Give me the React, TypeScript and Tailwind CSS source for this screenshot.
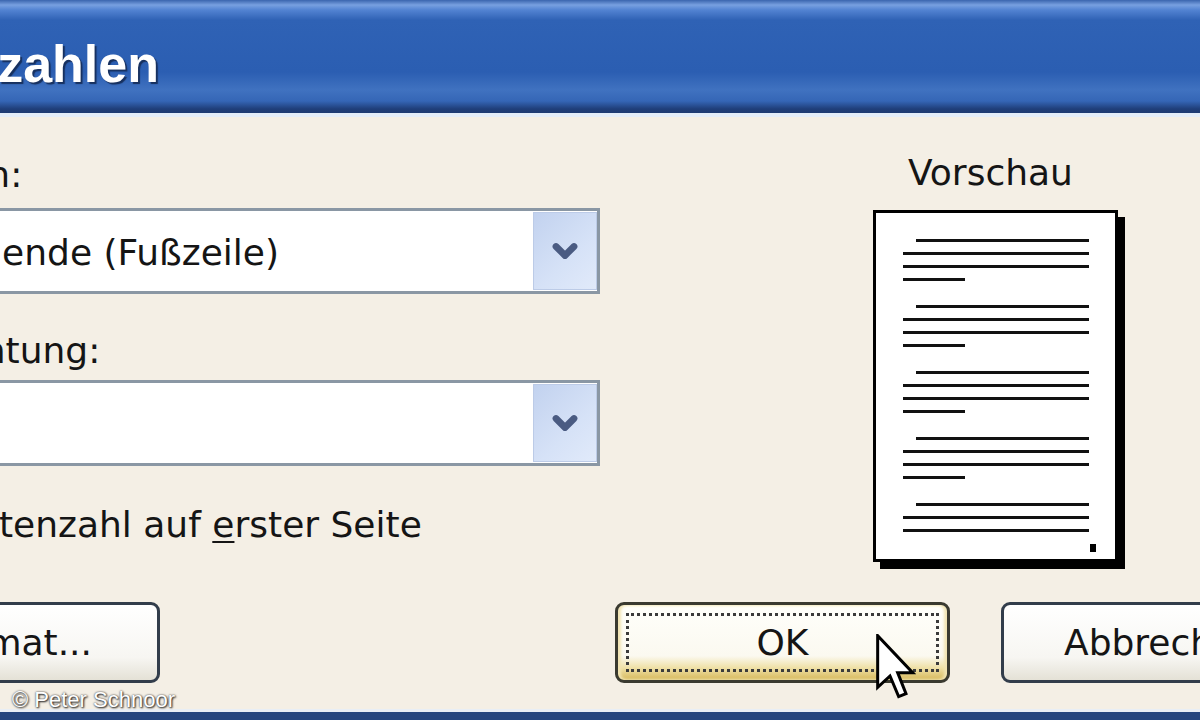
import { ChevronDown } from "lucide-react"

// Word XP "Seitenzahlen" dialog, zoomed in and cropped on the left / right edge

function Combo({ value, inset = 15 }: { value: string; inset?: number }) {
  return (
    <div className="flex h-[86px] w-[730px] shrink-0 border-[3px] border-[#8a97a4] bg-white">
      <div
        className={
          inset === 15
            ? "flex-1 whitespace-nowrap pl-[15px] pt-[21px] text-[36px] leading-[42px]"
            : "flex-1 whitespace-nowrap pl-[3px] pt-[21px] text-[36px] leading-[42px]"
        }
      >
        {value}
      </div>
      <div className="my-[1px] flex w-[64px] items-center justify-center border border-[#bccbe7] bg-[linear-gradient(135deg,#c2d2ef,#d6e2f7_60%,#e1eafa)]">
        <ChevronDown className="h-[36px] w-[36px] text-[#4a5b82]" strokeWidth={4.5} />
      </div>
    </div>
  )
}

function PagePreview() {
  const groups = [4, 4, 4, 4, 3]
  return (
    <div className="flex h-[352px] w-[245px] flex-col border-[3px] border-black bg-white pl-[27px] pr-[26px] pt-[26px] shadow-[7px_7px_0_0_#000]">
      <div className="flex flex-col gap-[24px]">
        {groups.map((n, gi) => (
          <div key={gi} className="flex flex-col gap-[10px]">
            {Array.from({ length: n }).map((_, i) => (
              <div
                key={i}
                className={
                  i === 0
                    ? "ml-[13px] h-[3px] bg-[#111]"
                    : i === 3
                      ? "h-[3px] w-[62px] bg-[#111]"
                      : "h-[3px] bg-[#111]"
                }
              />
            ))}
          </div>
        ))}
      </div>
      <div className="-mr-[7px] mt-[12px] flex justify-end">
        <div className="h-[8px] w-[6px] bg-black" />
      </div>
    </div>
  )
}

export default function App() {
  return (
    <div className="relative flex h-[720px] w-[1200px] flex-col overflow-hidden bg-[#f4efe5] font-['DejaVu_Sans',sans-serif] text-[#151515]">
      {/* title bar */}
      <div className="h-[113px] bg-[linear-gradient(to_bottom,#3a65ae_0px,#78a0e0_5px,#5283d2_10px,#2f62b5_20px,#2b5eb2_72px,#4072c0_90px,#3566b6_101px,#1f3e79_109px,#1d3b73_113px)]">
        <div className="flex w-[159px] justify-end pt-[38px]">
          <span className="whitespace-nowrap font-['Liberation_Sans',sans-serif] text-[52px] font-bold leading-none text-white [text-shadow:2px_2px_1px_#17305e]">
            Seitenzahlen
          </span>
        </div>
      </div>
      <div className="h-[4px] bg-[#e3edf9]" />

      <main className="flex flex-1 flex-col">
        <div className="flex">
          {/* left column */}
          <div className="-ml-[130px] flex w-[730px] shrink-0 flex-col pt-[37px] text-[36px] leading-[42px]">
            <div className="h-[42px] whitespace-nowrap">Position:</div>
            <div className="mt-[12px]">
              <Combo value="Seitenende (Fußzeile)" />
            </div>
            <div className="mt-[36px] h-[42px] whitespace-nowrap pl-[2px]">Ausrichtung:</div>
            <div className="mt-[8px]">
              <Combo value="Rechts" inset={3} />
            </div>
            <div className="mt-[38px] flex items-start">
              <div className="mt-[3px] h-[36px] w-[36px] shrink-0 border-[3px] border-[#1c5180] bg-white" />
              <div className="ml-[38px] h-[42px] whitespace-nowrap">
                Seitenzahl auf <span className="underline decoration-2 underline-offset-4">e</span>rster Seite
              </div>
            </div>
          </div>

          {/* preview */}
          <div className="ml-[273px] flex w-[252px] shrink-0 flex-col pt-[35px]">
            <div className="h-[42px] whitespace-nowrap pl-[35px] text-[36px] leading-[42px]">Vorschau</div>
            <div className="mt-[16px]">
              <PagePreview />
            </div>
          </div>
        </div>

        {/* buttons */}
        <div className="mt-[40px] flex text-[36px] leading-[42px]">
          <button className="-ml-[175px] flex h-[81px] w-[335px] shrink-0 rounded-[9px] border-[3px] border-[#323d4b] bg-[linear-gradient(to_bottom,#ffffff,#f7f6f2_70%,#e4e1d6)] p-[8px]">
            <div className="flex h-full flex-1 items-center justify-end border-[3px] border-transparent pr-[54px]">
              <span className="whitespace-nowrap">Format...</span>
            </div>
          </button>
          <button className="ml-[455px] flex h-[81px] w-[335px] shrink-0 rounded-[9px] border-[3px] border-[#3a3a30] bg-[linear-gradient(to_bottom,#fffffb,#fbf9f0_68%,#efe0a6_84%,#d6b85a)] p-[8px] shadow-[inset_3px_0_3px_#f1e4b2,inset_-3px_0_3px_#f1e4b2]">
            <div className="flex h-full flex-1 items-center justify-center border-[3px] border-dotted border-[#3b3b3b]">
              <span>OK</span>
            </div>
          </button>
          <button className="ml-[51px] flex h-[81px] w-[335px] shrink-0 rounded-[9px] border-[3px] border-[#323d4b] bg-[linear-gradient(to_bottom,#ffffff,#f7f6f2_70%,#e4e1d6)] p-[8px]">
            <div className="flex h-full flex-1 items-center justify-start border-[3px] border-transparent pl-[49px]">
              <span className="whitespace-nowrap">Abbrechen</span>
            </div>
          </button>
        </div>
      </main>

      <div className="h-[3px] bg-[#e8eef5]" />
      <div className="h-[8px] bg-[#24457e]" />

      {/* watermark */}
      <div className="absolute left-[12px] top-[689px] whitespace-nowrap font-['Liberation_Sans',sans-serif] text-[22px] leading-none text-white [text-shadow:0_0_2px_#333,1px_1px_2px_#222]">
        © Peter Schnoor
      </div>

      {/* mouse pointer */}
      <svg className="absolute left-[876px] top-[634px]" width="40" height="70" viewBox="0 0 12 21">
        <polygon
          points="0.5,0.5 0.5,16 4.2,12.6 6.8,18.8 9,17.9 6.5,11.6 11,11.6"
          fill="white"
          stroke="black"
          strokeWidth="0.9"
          strokeLinejoin="miter"
        />
      </svg>
    </div>
  )
}
